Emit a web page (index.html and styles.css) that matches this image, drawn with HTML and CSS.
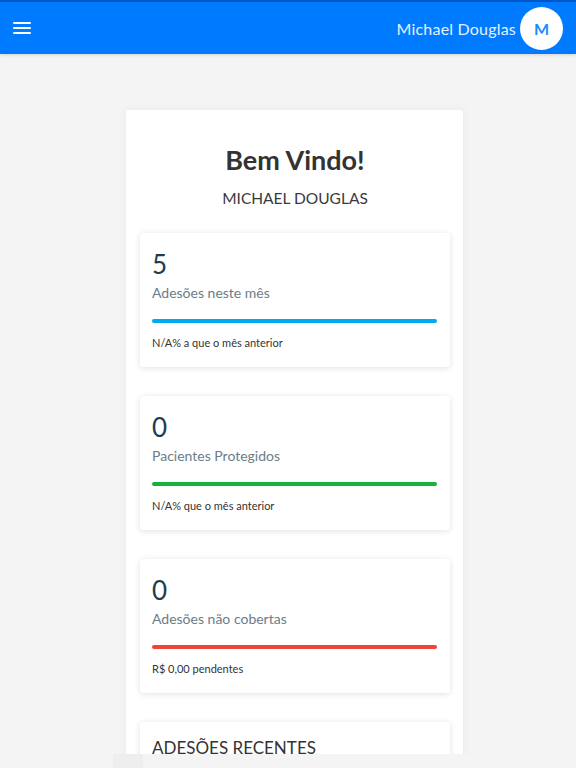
FILE: index.html
```html
<!DOCTYPE html>
<html lang="pt-BR">
<head>
    <meta charset="UTF-8">
    <title>Dashboard</title>
    <link rel="stylesheet" href="styles.css">
</head>
<body>
    <header class="topbar">
        <button class="menu-btn" aria-label="Menu">
            <svg width="18" height="14" viewBox="0 0 18 14">
                <rect x="0" y="1" width="18" height="2" rx="1" fill="#fff"/>
                <rect x="0" y="6" width="18" height="2" rx="1" fill="#fff"/>
                <rect x="0" y="11" width="18" height="2" rx="1" fill="#fff"/>
            </svg>
        </button>
        <div class="user">
            <span class="user-name">Michael Douglas</span>
            <span class="avatar">M</span>
        </div>
    </header>

    <main class="content">
        <section class="panel">
            <h1>Bem Vindo!</h1>
            <p class="subtitle">MICHAEL DOUGLAS</p>

            <div class="stat">
                <div class="stat-value">5</div>
                <div class="stat-label">Adesões neste mês</div>
                <div class="bar bar-blue"></div>
                <div class="stat-note">N/A% a que o mês anterior</div>
            </div>

            <div class="stat">
                <div class="stat-value">0</div>
                <div class="stat-label">Pacientes Protegidos</div>
                <div class="bar bar-green"></div>
                <div class="stat-note">N/A% que o mês anterior</div>
            </div>

            <div class="stat">
                <div class="stat-value">0</div>
                <div class="stat-label">Adesões não cobertas</div>
                <div class="bar bar-red"></div>
                <div class="stat-note">R$ 0,00 pendentes</div>
            </div>

            <div class="stat recent">
                <h3>ADESÕES RECENTES</h3>
            </div>
        </section>
    </main>

    <div class="bottom-strip"><span class="strip-tab"></span></div>
</body>
</html>
```

FILE: styles.css
```css
* {
    margin: 0;
    padding: 0;
    box-sizing: border-box;
}

body {
    font-family: Lato, "Open Sans", sans-serif;
    background: #f4f4f4;
    color: #333;
    height: 768px;
    overflow: hidden;
}

.topbar {
    height: 54px;
    background: #007bff;
    border-top: 2px solid #0056c8;
    display: flex;
    justify-content: space-between;
    align-items: center;
    padding: 0 13px 0 13px;
    box-shadow: 0 1px 3px rgba(0, 0, 0, 0.15);
}

.menu-btn {
    background: none;
    border: none;
    display: flex;
    align-items: center;
}

.user {
    display: flex;
    align-items: center;
}

.user-name {
    color: #e3f0ff;
    font-size: 16px;
    font-weight: 400;
    letter-spacing: 0.2px;
    margin-right: 4px;
}

.avatar {
    width: 43px;
    height: 43px;
    border-radius: 50%;
    background: #fff;
    color: #1a8cff;
    font-weight: bold;
    font-size: 16px;
    display: flex;
    justify-content: center;
    align-items: center;
}

.content {
    padding: 56px 113px 0 126px;
}

.panel {
    background: #fff;
    border-radius: 3px;
    box-shadow: 0 0 10px rgba(0, 0, 0, 0.05);
    padding: 33px 13px 0 14px;
}

h1 {
    text-align: center;
    font-size: 27px;
    line-height: 34px;
    font-weight: bold;
    color: #333;
}

.subtitle {
    text-align: center;
    font-size: 15.5px;
    line-height: 20px;
    color: #3a3a3a;
    margin-top: 11px;
    margin-bottom: 25px;
}

.stat {
    background: #fff;
    border-radius: 3px;
    box-shadow: 0 1px 6px rgba(0, 0, 0, 0.12);
    padding: 16px 13px 16px 12px;
    margin-bottom: 29px;
}

.stat-value {
    font-size: 26px;
    line-height: 30px;
    color: #1c3d4f;
}

.stat-label {
    font-size: 14px;
    line-height: 20px;
    color: #6b7d88;
    margin-top: 4px;
}

.bar {
    height: 4px;
    border-radius: 2px;
    margin-top: 16px;
}

.bar-blue {
    background: #00aaee;
}

.bar-green {
    background: #16b33c;
}

.bar-red {
    background: #f0433a;
}

.stat-note {
    font-size: 11px;
    line-height: 16px;
    color: #333;
    margin-top: 12px;
}

.recent h3 {
    font-size: 17px;
    line-height: 20px;
    font-weight: normal;
    color: #333;
}

.bottom-strip {
    position: fixed;
    left: 0;
    right: 0;
    bottom: 0;
    height: 14px;
    background: #f4f4f4;
}

.strip-tab {
    display: block;
    margin-left: 113px;
    width: 30px;
    height: 14px;
    background: #eeeeee;
}
```
